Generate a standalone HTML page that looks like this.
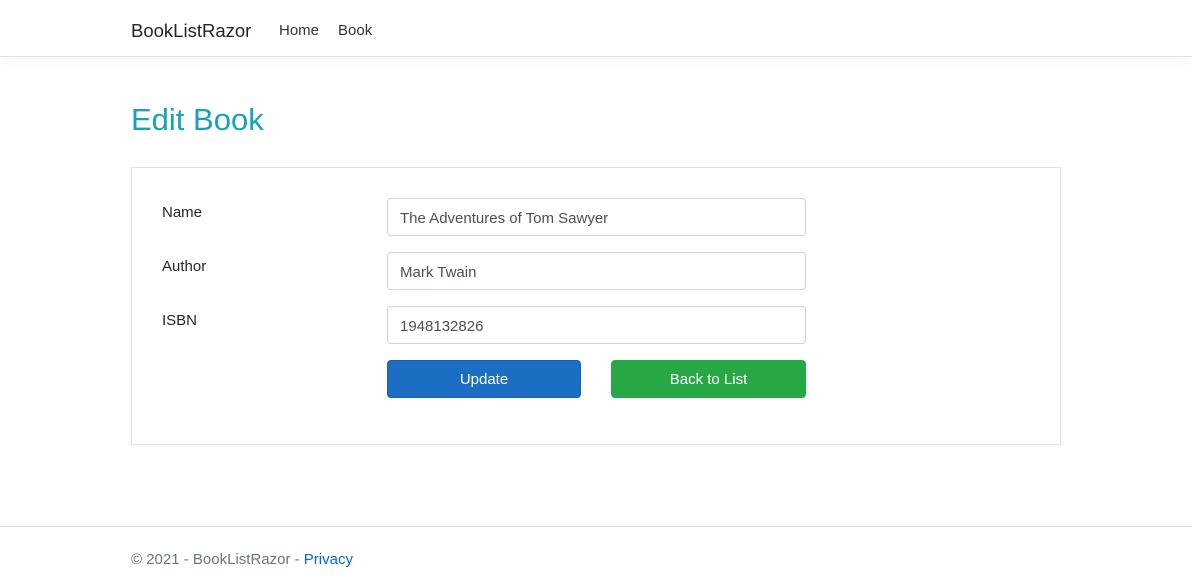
<!DOCTYPE html>
<html><head><meta charset="utf-8"><style>
*{box-sizing:border-box;margin:0;padding:0}
body{width:1192px;height:587px;background:#fff;font-family:"Liberation Sans",sans-serif;color:#212529;position:relative;overflow:hidden}
.nav{position:absolute;left:0;top:0;width:1192px;height:57px;border-bottom:1px solid #dee2e6;box-shadow:0 4px 10px rgba(0,0,0,.04)}
.brand{position:absolute;left:131px;top:20px;font-size:18.5px;color:#212529}
.nl{position:absolute;top:22px;font-size:15px;color:#333}
h1{position:absolute;left:131px;top:102px;font-size:31px;font-weight:400;color:#17a2b8}
.box{position:absolute;left:131px;top:167px;width:930px;height:278px;border:1px solid #dee2e6}
.lbl{position:absolute;left:162px;font-size:15px}
.inp{position:absolute;left:387px;width:419px;height:38px;border:1px solid #ced4da;border-radius:4px;padding:11px 12px 0;font-size:15px;color:#495057}
.btn{position:absolute;top:360px;height:38px;border-radius:4px;color:#fff;font-size:15px;text-align:center;line-height:38px}
.foot{position:absolute;left:0;top:526px;width:1192px;border-top:1px solid #dee2e6}
.ft{position:absolute;left:131px;top:551px;font-size:15px;color:#6c757d}
.ft a{color:#0366d6;text-decoration:none}
</style></head><body>
<div class="nav"></div>
<div class="brand">BookListRazor</div>
<div class="nl" style="left:279px">Home</div>
<div class="nl" style="left:338px">Book</div>
<h1>Edit Book</h1>
<div class="box"></div>
<div class="lbl" style="top:204px">Name</div>
<div class="lbl" style="top:258px">Author</div>
<div class="lbl" style="top:312px">ISBN</div>
<div class="inp" style="top:198px">The Adventures of Tom Sawyer</div>
<div class="inp" style="top:252px">Mark Twain</div>
<div class="inp" style="top:306px">1948132826</div>
<div class="btn" style="left:387px;width:194px;background:#1b6ec2;border:1px solid #1861ac;line-height:38px">Update</div>
<div class="btn" style="left:611px;width:195px;background:#28a745;border:1px solid #28a745;line-height:38px">Back to List</div>
<div class="foot"></div>
<div class="ft">© 2021 - BookListRazor - <a>Privacy</a></div>
</body></html>
